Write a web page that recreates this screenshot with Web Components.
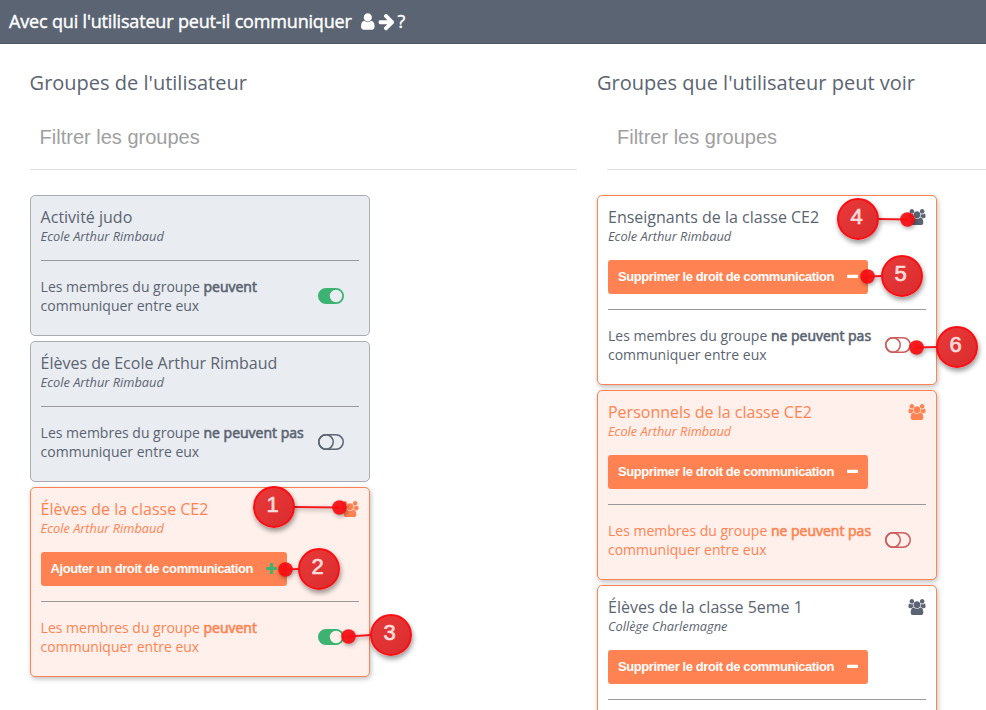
<!DOCTYPE html>
<html lang="fr">
<head>
<meta charset="utf-8">
<title>Communication</title>
<style>
    html, body {
        margin: 0;
        height: 710px;
        overflow: hidden;
        background: #fff;
    }
    body {
        position: relative;
        color: #5b6472;
        font-family: "Open Sans", sans-serif;
        font-size: 14px;
    }
</style>
</head>
<body>

<comm-header>Avec qui l'utilisateur peut-il communiquer</comm-header>

<comm-columns>
    <group-column header="Groupes de l'utilisateur">
        <group-card class="idle" name="Activité judo" structure="Ecole Arthur Rimbaud" internal="on"></group-card>
        <group-card class="idle" name="Élèves de Ecole Arthur Rimbaud" structure="Ecole Arthur Rimbaud" internal="off"></group-card>
        <group-card class="selected" name="Élèves de la classe CE2" structure="Ecole Arthur Rimbaud" action="add" internal="on" users></group-card>
    </group-column>
    <group-column class="visible" header="Groupes que l'utilisateur peut voir">
        <group-card name="Enseignants de la classe CE2" structure="Ecole Arthur Rimbaud" action="remove" internal="off" users></group-card>
        <group-card class="selected" name="Personnels de la classe CE2" structure="Ecole Arthur Rimbaud" action="remove" internal="off" users></group-card>
        <group-card name="Élèves de la classe 5eme 1" structure="Collège Charlemagne" action="remove" internal="off" users></group-card>
    </group-column>
</comm-columns>

<call-out x="273.5" y="506.5" to-x="339" to-y="507">1</call-out>
<call-out x="318.5" y="568.5" to-x="285" to-y="569">2</call-out>
<call-out x="390.5" y="634.5" to-x="348" to-y="636">3</call-out>
<call-out x="857.5" y="218.5" to-x="907" to-y="219">4</call-out>
<call-out x="901.5" y="275.5" to-x="867" to-y="276">5</call-out>
<call-out x="956.5" y="346.5" to-x="916" to-y="347">6</call-out>

<script>
const ICONS = {
    user: {
        box: '0 0 1280 1792',
        path: 'M1280 1399q0 109-62.5 187t-150.5 78h-854q-88 0-150.5-78t-62.5-187q0-85 8.5-160.5t31.5-152 58.5-131 94-89 134.5-34.5q131 128 313 128t313-128q76 0 134.5 34.5t94 89 58.5 131 31.5 152 8.5 160.5zm-256-887q0 159-112.5 271.5t-271.5 112.5-271.5-112.5-112.5-271.5 112.5-271.5 271.5-112.5 271.5 112.5 112.5 271.5z'
    },
    arrow: {
        box: '64 0 1536 1792',
        path: 'M1600 960q0 54-37 91l-651 651q-39 37-91 37-51 0-90-37l-75-75q-38-38-38-91t38-91l293-293h-704q-52 0-84.5-37.5t-32.5-90.5v-128q0-53 32.5-90.5t84.5-37.5h704l-293-294q-38-36-38-90t38-90l75-75q38-38 90-38 53 0 91 38l651 651q37 35 37 90z'
    },
    users: {
        box: '0 0 1920 1792',
        path: 'M593 896q-162 5-265 128h-134q-82 0-138-40.5t-56-118.5q0-353 124-353 6 0 43.5 21t97.5 42.5 119 21.5q67 0 133-23-5 37-5 66 0 139 81 256zm1071 637q0 120-73 189.5t-194 69.5h-874q-121 0-194-69.5t-73-189.5q0-53 3.5-103.5t14-109 26.5-108.5 43-97.5 62-81 85.5-53.5 111.5-20q10 0 43 21.5t73 48 107 48 135 21.5 135-21.5 107-48 73-48 43-21.5q61 0 111.5 20t85.5 53.5 62 81 43 97.5 26.5 108.5 14 109 3.5 103.5zm-1024-1277q0 106-75 181t-181 75-181-75-75-181 75-181 181-75 181 75 75 181zm704 384q0 159-112.5 271.5t-271.5 112.5-271.5-112.5-112.5-271.5 112.5-271.5 271.5-112.5 271.5 112.5 112.5 271.5zm576 225q0 78-56 118.5t-138 40.5h-134q-103-123-265-128 81-117 81-256 0-29-5-66 66 23 133 23 59 0 119-21.5t97.5-42.5 43.5-21q124 0 124 353zm-128-609q0 106-75 181t-181 75-181-75-75-181 75-181 181-75 181 75 75 181z'
    },
    plus: {
        box: '0 0 11 11',
        path: 'M4.6 0h1.8q.7 0 .7.7v3.2h3.2q.7 0 .7.7v1.8q0 .7-.7.7h-3.2v3.2q0 .7-.7.7h-1.8q-.7 0-.7-.7v-3.2h-3.2q-.7 0-.7-.7v-1.8q0-.7.7-.7h3.2v-3.2q0-.7.7-.7z'
    },
    minus: {
        box: '0 0 11 11',
        path: 'M.8 3.7h9.4q.8 0 .8.8v1.8q0 .8-.8.8h-9.4q-.8 0-.8-.8v-1.8q0-.8.8-.8z'
    }
};

class SvgIcon extends HTMLElement {
    connectedCallback() {
        const icon = ICONS[this.getAttribute('name')];
        this.attachShadow({ mode: 'open' }).innerHTML = `
            <style>
                :host { display: block; flex: none; }
                svg { display: block; width: 100%; height: 100%; fill: currentColor; }
            </style>
            <svg viewBox="${icon.box}"><path d="${icon.path}"/></svg>
        `;
    }
}

class ToggleSwitch extends HTMLElement {
    connectedCallback() {
        const on = this.hasAttribute('on');
        const shape = on
            ? '<path fill="currentColor" fill-rule="evenodd" d="M8 0H18A8 8 0 0 1 18 16H8A8 8 0 0 1 8 0zM18 1.8a6.2 6.2 0 1 0 0 12.4a6.2 6.2 0 1 0 0-12.4z"/>'
            : '<g fill="none" stroke="currentColor" stroke-width="1.5"><rect x=".75" y=".75" width="24.5" height="14.5" rx="7.25"/><circle cx="8" cy="8" r="7.25"/></g>';
        this.attachShadow({ mode: 'open' }).innerHTML = `
            <style>
                :host { display: block; flex: none; width: 26px; height: 16px; }
                svg { display: block; }
            </style>
            <svg width="26" height="16" viewBox="0 0 26 16">${shape}</svg>
        `;
    }
}

class CommHeader extends HTMLElement {
    connectedCallback() {
        this.attachShadow({ mode: 'open' }).innerHTML = `
            <style>
                :host {
                    display: flex;
                    align-items: center;
                    box-sizing: border-box;
                    height: 44px;
                    padding: 0 0 1px 9px;
                    border-bottom: 1px solid #4d5561;
                    background: #5b6472;
                    color: #fff;
                    font-size: 18px;
                    white-space: nowrap;
                    -webkit-text-stroke: .4px #fff;
                }
                .title { letter-spacing: -.17px; }
                svg-icon { height: 19px; }
                .user { width: 13.6px; margin-left: 9.5px; }
                .arrow { width: 16.3px; margin: 0 3.5px 0 3px; }
            </style>
            <span class="title"><slot></slot></span>
            <svg-icon class="user" name="user"></svg-icon>
            <svg-icon class="arrow" name="arrow"></svg-icon>
            <span>?</span>
        `;
    }
}

class CommColumns extends HTMLElement {
    connectedCallback() {
        this.attachShadow({ mode: 'open' }).innerHTML = `
            <style>
                :host {
                    display: grid;
                    grid-template-columns: 547px 547px;
                    column-gap: 20.4px;
                    padding: 24px 0 0 29.6px;
                }
            </style>
            <slot></slot>
        `;
    }
}

class GroupColumn extends HTMLElement {
    connectedCallback() {
        this.attachShadow({ mode: 'open' }).innerHTML = `
            <style>
                :host { display: block; }
                h2 {
                    margin: 0;
                    font-size: 20px;
                    font-weight: 400;
                    line-height: 30px;
                    white-space: nowrap;
                }
                .filter {
                    box-sizing: border-box;
                    height: 64px;
                    margin-top: 8px;
                    padding: 0 10px;
                    border-bottom: 1px solid #e0e0e0;
                    color: #a0a0a0;
                    font: 20px/62px "Liberation Sans", sans-serif;
                }
                :host(.visible) .filter { margin-left: 10px; }
                .cards {
                    display: flex;
                    flex-direction: column;
                    gap: 5px;
                    width: 340px;
                    padding-top: 25px;
                }
            </style>
            <h2>${this.getAttribute('header')}</h2>
            <div class="filter">Filtrer les groupes</div>
            <div class="cards"><slot></slot></div>
        `;
    }
}

class GroupCard extends HTMLElement {
    connectedCallback() {
        const action = this.getAttribute('action');
        const on = this.getAttribute('internal') === 'on';
        let buttonHTML = '';
        if (action) {
            buttonHTML = `
                <button class="${action}">
                    <span>${action === 'add' ? 'Ajouter un' : 'Supprimer le'} droit de communication</span>
                    <svg-icon name="${action === 'add' ? 'plus' : 'minus'}"></svg-icon>
                </button>
            `;
        }

        this.attachShadow({ mode: 'open' }).innerHTML = `
            <style>
                :host {
                    --switch-off: #cd5c5c;
                    display: block;
                    box-sizing: border-box;
                    padding: 10px;
                    border: 1px solid #ff8352;
                    border-radius: 5px;
                    background: #fff;
                    box-shadow: 1px 2px 5px rgba(0, 0, 0, .25);
                }
                :host(.idle) {
                    --switch-off: #5b6472;
                    border-color: #a9adb2;
                    background: #e9ecf1;
                    box-shadow: none;
                }
                :host(.selected) {
                    background: #fff0eb;
                    color: #ff8352;
                }
                .top { display: flex; justify-content: space-between; height: 22px; }
                .name { font-size: 16px; line-height: 22px; white-space: nowrap; }
                .top svg-icon { width: 18px; height: 16px; margin-top: 3px; }
                .structure { font-size: 12.8px; font-style: italic; line-height: 17px; }
                button {
                    display: flex;
                    align-items: center;
                    box-sizing: border-box;
                    height: 34px;
                    margin: 15px 0 0;
                    padding: 0 10px 1px;
                    border: 0;
                    border-radius: 3px;
                    background: #ff8352;
                    color: #fff;
                    font: bold 13px "Liberation Sans", sans-serif;
                    letter-spacing: -.41px;
                    white-space: nowrap;
                }
                button svg-icon { width: 11px; height: 11px; margin-left: 13px; }
                button.add svg-icon { color: #3cb371; }
                hr {
                    height: 1px;
                    margin: 15px 0 16px;
                    border: 0;
                    background: #999;
                }
                .internal {
                    display: flex;
                    align-items: center;
                    justify-content: space-between;
                    padding: 0 15px 10px 0;
                    line-height: 19px;
                    white-space: nowrap;
                }
                b { font-weight: 400; -webkit-text-stroke: .6px currentColor; }
                toggle-switch { color: var(--switch-off); }
                toggle-switch[on] { color: #3cb371; }
            </style>
            <div class="top">
                <div class="name">${this.getAttribute('name')}</div>
                ${this.hasAttribute('users') ? '<svg-icon name="users"></svg-icon>' : ''}
            </div>
            <div class="structure">${this.getAttribute('structure')}</div>
            ${buttonHTML}
            <hr>
            <div class="internal">
                <div>Les membres du groupe <b>${on ? 'peuvent' : 'ne peuvent pas'}</b><br>communiquer entre eux</div>
                <toggle-switch ${on ? 'on' : ''}></toggle-switch>
            </div>
        `;
    }
}

// numbered marker with a line to the control it explains
class CallOut extends HTMLElement {
    connectedCallback() {
        const x = Number(this.getAttribute('x'));
        const y = Number(this.getAttribute('y'));
        const dx = Number(this.getAttribute('to-x')) - x;
        const dy = Number(this.getAttribute('to-y')) - y;
        const start = 20 * Math.sign(dx);
        this.attachShadow({ mode: 'open' }).innerHTML = `
            <style>
                :host {
                    position: absolute;
                    left: ${x - 21}px;
                    top: ${y - 21}px;
                    width: 42px;
                    height: 42px;
                }
                svg {
                    position: absolute;
                    inset: 0;
                    overflow: visible;
                    filter: drop-shadow(1px 2px 2px rgba(0, 0, 0, .35));
                }
                .disc {
                    position: absolute;
                    inset: 0;
                    box-sizing: border-box;
                    padding-right: 2px;
                    border: 2px solid #fb0d11;
                    border-radius: 50%;
                    background: linear-gradient(135deg, #e93a3a, #da2b2e);
                    box-shadow: 1px 3px 5px rgba(0, 0, 0, .4);
                    color: #fbdcdc;
                    font: 22px/34px "Liberation Sans", sans-serif;
                    text-align: center;
                    -webkit-text-stroke: .7px #fbdcdc;
                }
            </style>
            <svg width="42" height="42" viewBox="-21 -21 42 42">
                <path d="M${start} 0L${dx} ${dy}" stroke="#f51a20" stroke-width="2"/>
                <circle cx="${dx}" cy="${dy}" r="7.3" fill="#f80c10" fill-opacity=".92"/>
            </svg>
            <div class="disc"><slot></slot></div>
        `;
    }
}

customElements.define('svg-icon', SvgIcon);
customElements.define('toggle-switch', ToggleSwitch);
customElements.define('comm-header', CommHeader);
customElements.define('comm-columns', CommColumns);
customElements.define('group-column', GroupColumn);
customElements.define('group-card', GroupCard);
customElements.define('call-out', CallOut);
</script>
</body>
</html>
